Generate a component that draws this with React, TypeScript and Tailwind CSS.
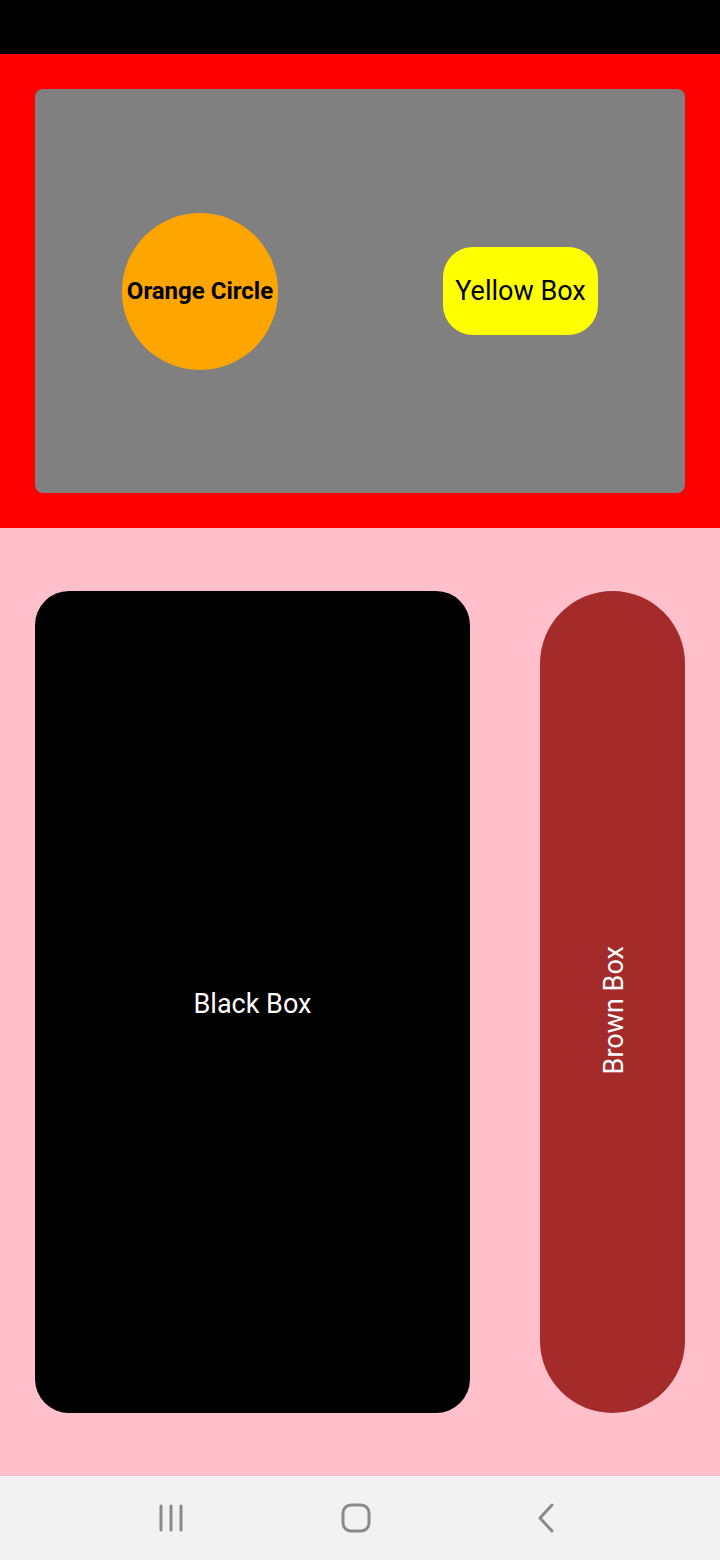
const NavBar = () => {
    return (
        <div className="flex h-[84px] w-full items-center bg-[#f2f2f2]">
            <div className="flex w-[341px] justify-center">
                <svg width="26" height="28" viewBox="0 0 26 28">
                    <g stroke="#8a8a8a" strokeWidth="3" strokeLinecap="round">
                        <line x1="3" y1="2" x2="3" y2="26" />
                        <line x1="13" y1="2" x2="13" y2="26" />
                        <line x1="23" y1="2" x2="23" y2="26" />
                    </g>
                </svg>
            </div>
            <svg width="30" height="30" viewBox="0 0 30 30">
                <rect x="2" y="2" width="26" height="26" rx="8" fill="none" stroke="#8a8a8a" strokeWidth="3" />
            </svg>
            <div className="flex flex-1 justify-start pl-[165px]">
                <svg width="20" height="30" viewBox="0 0 20 30">
                    <path d="M16 2 L4 15 L16 28" fill="none" stroke="#8a8a8a" strokeWidth="3" strokeLinecap="round" strokeLinejoin="round" />
                </svg>
            </div>
        </div>
    )
}

const App = () => {
    return (
        <div className="flex h-[1560px] w-[720px] flex-col font-['Roboto',sans-serif]">
            {/* status bar */}
            <div className="h-[54px] w-full bg-black" />

            {/* red section */}
            <div className="flex h-[474px] w-full flex-col bg-[#ff0000] px-[35px] py-[35px]">
                <div className="flex flex-1 items-center justify-between rounded-lg bg-[#808080] px-[87px]">
                    <div className="flex h-[157px] w-[156px] items-center justify-center rounded-full bg-[#ffa500] text-[24px] font-bold whitespace-nowrap text-black">
                        Orange Circle
                    </div>
                    <div className="flex h-[88px] w-[155px] items-center justify-center rounded-[30px] bg-[#ffff00] text-[27px] whitespace-nowrap text-black">
                        Yellow Box
                    </div>
                </div>
            </div>

            {/* pink section */}
            <div className="flex h-[948px] w-full gap-[70px] bg-[#ffc0cb] px-[35px] py-[63px]">
                <div className="flex w-[435px] items-center justify-center rounded-[34px] bg-black pt-[4px] text-[27px] text-white">
                    Black Box
                </div>
                <div className="flex flex-1 items-center justify-center rounded-full bg-[#a52a2a] pt-[16px] pl-[4px]">
                    <span className="-rotate-90 whitespace-nowrap text-[27px] text-white">Brown Box</span>
                </div>
            </div>

            <NavBar />
        </div>
    )
}

export default App
